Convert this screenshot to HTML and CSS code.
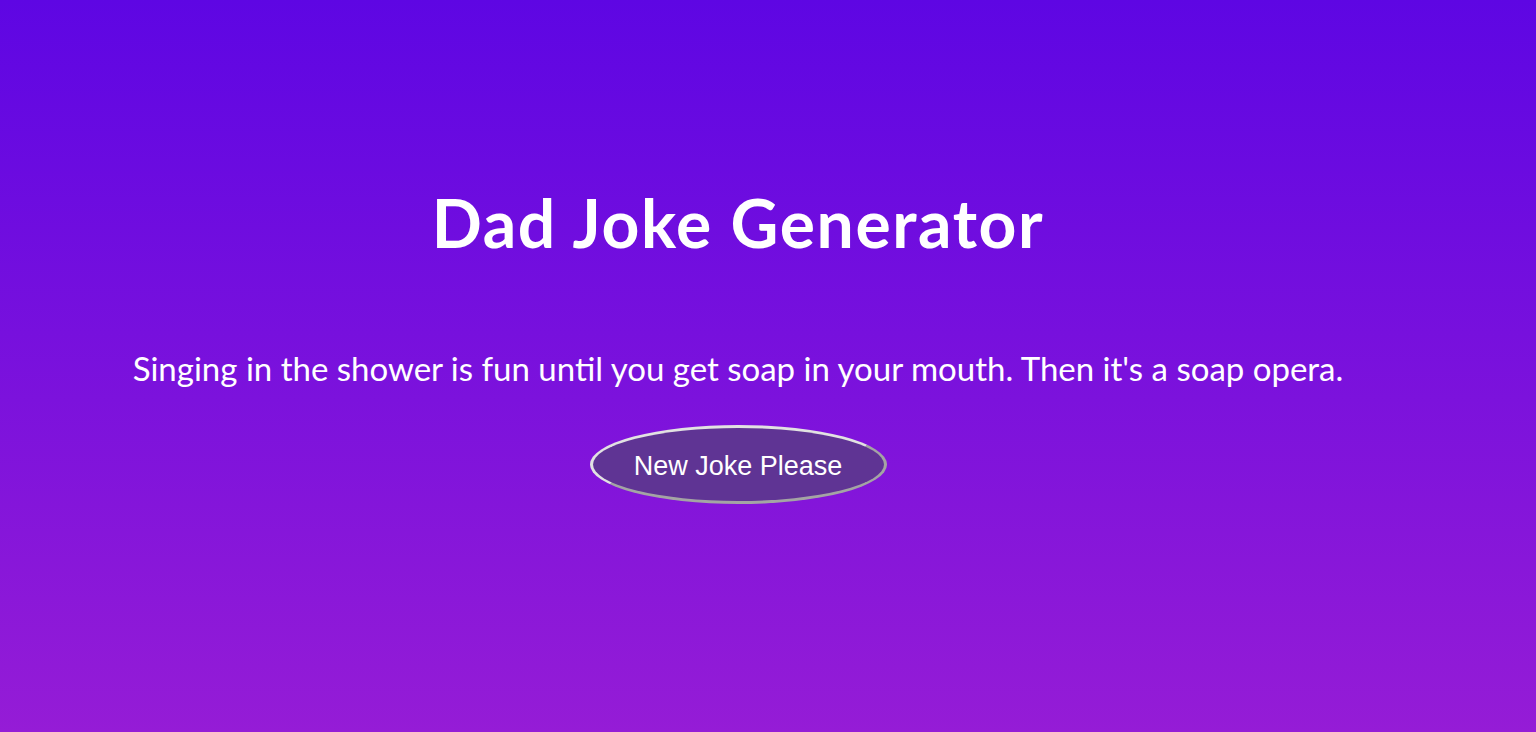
FILE: index.html
```html
<!DOCTYPE html>
<html lang="en">
<head>
<meta charset="utf-8">
<title>Dad Joke Generator</title>
<link rel="stylesheet" href="styles.css">
</head>
<body>
<main class="app">
  <h1 class="title">Dad Joke Generator</h1>
  <p class="joke">Singing in the shower is fun until you get soap in your mouth. Then it's a soap opera.</p>
  <button class="btn" type="button">New Joke Please</button>
</main>
</body>
</html>
```
FILE: styles.css
```css
html, body {
  margin: 0;
  height: 100%;
}
body {
  background: linear-gradient(to bottom, #5e06e3 0%, #951cd6 100%);
  color: #fff;
  font-family: "Lato", "Liberation Sans", sans-serif;
}
.app {
  width: 1476px;
  display: flex;
  flex-direction: column;
  align-items: center;
  padding-top: 183px;
}
.title {
  margin: 0;
  font-size: 66px;
  font-weight: 700;
  line-height: 80px;
  letter-spacing: 1.6px;
}
.joke {
  margin: 85px 0 0;
  font-size: 33px;
  font-weight: 400;
  line-height: 40px;
}
.btn {
  margin-top: 37px;
  width: 297px;
  height: 79px;
  border-radius: 50%;
  border-style: solid;
  border-width: 3px;
  border-color: #e2e2e2 #a4a4a4 #a4a4a4 #e2e2e2;
  background: #5f3494;
  color: #fff;
  font-family: "Liberation Sans", Arial, sans-serif;
  font-size: 27px;
  padding: 3px 0 0;
}
```
